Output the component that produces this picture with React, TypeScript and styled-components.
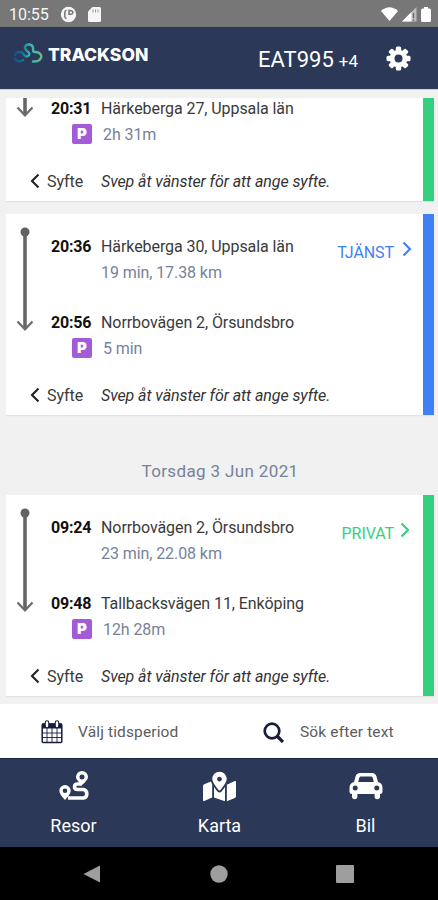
import React from "react";
import styled, { createGlobalStyle } from "styled-components";
import { FaMapMarkedAlt } from "react-icons/fa";

const GlobalStyle = createGlobalStyle`
  * { box-sizing: border-box; }
  body { margin: 0; font-family: Roboto, "Liberation Sans", sans-serif; }
`;

const Screen = styled.div`
  width: 438px;
  height: 900px;
  display: flex;
  flex-direction: column;
  overflow: hidden;
  background: #f1f1f1;
`;

const StatusBar = styled.div`
  flex: none;
  height: 27px;
  display: flex;
  align-items: center;
  justify-content: space-between;
  padding: 1px 7px 0 9px;
  background: #777;
  color: #f5f5f5;
  font-size: 16px;
`;

const StatusGroup = styled.div<{ $gap: number }>`
  display: flex;
  align-items: center;
  gap: ${(p) => p.$gap}px;
`;

const Header = styled.header`
  flex: none;
  height: 63px;
  display: flex;
  align-items: center;
  padding: 0 27px 0 13px;
  background: #2b3857;
  border-bottom: 1px solid #cdd1de;
  color: #fff;
`;

const Brand = styled.div`
  display: flex;
  align-items: center;
  gap: 5px;
  margin-top: -9px;
  font: 800 17.5px/24px Inter, sans-serif;
  letter-spacing: 0;
  flex: 1;
`;

const BrandName = styled.span`
  margin-top: 3px;
`;

const Vehicle = styled.div`
  display: flex;
  align-items: baseline;
  gap: 5px;
  margin-right: 28px;
  padding-top: 3px;
  font-size: 22px;
`;

const VehicleExtra = styled.span`
  font-size: 17px;
`;

const List = styled.main`
  flex: none;
  height: 606px;
  margin: 8px 4px 0 6px;
  overflow: hidden;
`;

const Card = styled.section<{ $stripe: string; $scrolled?: boolean }>`
  display: grid;
  grid-template-columns: 38px 1fr;
  height: 201px;
  margin-top: ${(p) => (p.$scrolled ? -98 : 0)}px;
  margin-bottom: 13px;
  background: #fff;
  border-right: 11px solid ${(p) => p.$stripe};
  box-shadow: 0 1px 1px #e2e2e2;
`;

const TrackColumn = styled.div`
  padding: 13px 0 0 10px;
`;

const Details = styled.div`
  display: grid;
  grid-template-rows: 26px 26px 24px 26px 26px 21px 26px;
  grid-template-columns: 57px 1fr auto;
  align-items: center;
  padding: 19px 11px 0 0;
  align-content: start;
  white-space: nowrap;
  font-size: 16px;
  letter-spacing: -0.08px;
`;

const Time = styled.span`
  grid-column: 1;
  padding-left: 7px;
  font-weight: 700;
  letter-spacing: -0.2px;
  color: #111;
`;

const Place = styled.span`
  grid-column: 2;
  color: #3a3a3a;
`;

const Meta = styled.span<{ $indent?: number }>`
  grid-column: 2;
  padding-left: ${(p) => p.$indent || 0}px;
  color: #76829a;
`;

const Spacer = styled.span<{ $rows?: number }>`
  grid-column: 1 / -1;
  grid-row: span ${(p) => p.$rows || 1};
  height: 100%;
`;

const Category = styled.span<{ $color: string; $inset: number }>`
  grid-column: 3;
  display: flex;
  align-items: center;
  gap: ${(p) => 8 - p.$inset}px;
  height: 26px;
  padding-right: ${(p) => p.$inset}px;
  color: ${(p) => p.$color};
`;

const CategoryLabel = styled.span`
  margin-top: 12px;
`;

const ChevronSlot = styled.span`
  display: flex;
  margin-top: 6px;
`;

const ParkingBadge = styled.span`
  grid-column: 1;
  display: flex;
  justify-content: center;
  align-items: center;
  width: 20px;
  height: 20px;
  margin-left: 28px;
  border-radius: 2px;
  background: #a45bd8;
  color: #fff;
  font: 900 15px/20px Inter, sans-serif;
`;

const Purpose = styled.span`
  display: flex;
  align-items: center;
  gap: 7px;
  margin-left: -14px;
  color: #3a3a3a;
`;

const Hint = styled.em`
  grid-column: 2;
  color: #333;
`;

const DayHeading = styled.h2`
  height: 67px;
  margin: 0;
  padding-top: 31px;
  font-size: 17px;
  font-weight: 400;
  letter-spacing: 0.36px;
  line-height: 24px;
  text-align: center;
  color: #76829a;
`;

const Filters = styled.div`
  flex: none;
  display: grid;
  grid-template-columns: 222px 1fr;
  height: 54px;
  background: #fff;
`;

const Filter = styled.div<{ $gap: number }>`
  display: flex;
  align-items: center;
  gap: ${(p) => p.$gap}px;
  padding: 2px 0 0 41px;
  font-size: 15.5px;
  letter-spacing: 0.14px;
  color: #5c5c5c;

  svg { color: #171e3c; }
`;

const Tabs = styled.nav`
  flex: none;
  display: grid;
  grid-template-columns: repeat(3, 146px);
  height: 89px;
  border-top: 1px solid #1c2748;
  background: #2b3857;
`;

const Tab = styled.div`
  display: flex;
  flex-direction: column;
  align-items: center;
  padding-top: 10px;
  padding-left: 1px;
  font-size: 18px;
  line-height: 24px;
  color: #fff;
`;

const TabIcon = styled.span`
  display: flex;
  align-items: center;
  height: 34px;
  margin-bottom: 11px;
`;

const SystemBar = styled.div`
  flex: none;
  height: 53px;
  display: flex;
  align-items: center;
  justify-content: space-between;
  padding: 0 84px 0 83px;
  background: #000;
`;

const BrandMark = () => (
  <svg width="30" height="22" viewBox="0 0 30 22" fill="none" strokeWidth="2.4" strokeLinecap="round">
    <defs>
      <linearGradient id="mark" gradientUnits="userSpaceOnUse" x1="1" y1="14" x2="29" y2="14">
        <stop offset="0" stopColor="#174d85" />
        <stop offset="0.3" stopColor="#13719a" />
        <stop offset="0.55" stopColor="#31b7b0" />
        <stop offset="1" stopColor="#67b98b" />
      </linearGradient>
    </defs>
    <path
      d="M2 12C4 8 9 8 11 12C13 15 17 13 16 10C15 8 11 7 12 4C13 .500 19 .500 20 4.500C20.500 7 19 9 22 9C27 8.500 30 13 27 16.500C25 19 22 18.500 20 18.500M2 16C4 19 8 19 10 17"
      stroke="url(#mark)"
    />
  </svg>
);

const AppGlyph = () => (
  <svg width="17" height="17" viewBox="0 0 17 17">
    <circle cx="8.500" cy="8.500" r="7.700" fill="#f5f5f5" />
    <path d="M6.500 4.300Q4.800 4.500 4.800 6.500V10.500Q5 12 6.500 12.500M9 3.500V9M9 4.700H11A1.800 1.800 0 0 1 11 8.300H9" fill="none" stroke="#777" strokeWidth="1.500" />
  </svg>
);

const SdCard = () => (
  <svg width="13" height="15" viewBox="0 0 13 15">
    <path d="M4.500 0H11.500Q13 0 13 1.500V13.500Q13 15 11.500 15H1.500Q0 15 0 13.500V4.500Z" fill="#f5f5f5" />
    <path d="M5 2.500v3M7.500 2.500v3M10 2.500v3" stroke="#999" />
  </svg>
);

const Wifi = () => (
  <svg width="17" height="14" viewBox="0 0 17 14">
    <path d="M0 4Q8.500-3.500 17 4L8.500 14Z" fill="#fff" />
  </svg>
);

const Signal = () => (
  <svg width="15" height="15" viewBox="0 0 15 15">
    <path d="M0 14.500L14.500 0V14.500Z" fill="#bdbdbd" />
    <path d="M0 14.500L9.500 5V14.500Z" fill="#fff" />
    <path d="M11.500 6v5M11.500 12.500v1.500" stroke="#666" strokeWidth="1.300" />
  </svg>
);

const Battery = () => (
  <svg width="10" height="15" viewBox="0 0 10 15">
    <path d="M3 0H7V1.500H8.500Q10 1.500 10 3V13.500Q10 15 8.500 15H1.500Q0 15 0 13.500V3Q0 1.500 1.500 1.500H3Z" fill="#fff" />
  </svg>
);

const GearIcon = () => (
  <svg width="25" height="25" viewBox="-12.5 -12.5 25 25">
    {[0, 45, 90, 135].map((angle) => (
      <rect key={angle} x="-2.7" y="-12" width="5.4" height="24" rx="1.5" fill="#fff" transform={`rotate(${angle})`} />
    ))}
    <circle r="8.800" fill="#fff" />
    <circle r="4" fill="#2b3857" />
  </svg>
);

const TrackLine = () => (
  <svg width="18" height="106" viewBox="0 0 18 106" fill="none" stroke="#6c6c6c">
    <path d="M9 5V102" stroke="#858585" strokeWidth="4" />
    <path d="M9 5V102" stroke="#666" strokeWidth="2" />
    <path d="M1.500 94.500L9 102.300L16.500 94.500" strokeWidth="2.200" />
    <circle cx="9" cy="5" r="4.500" fill="#626262" stroke="none" />
  </svg>
);

const Chevron = ({ left }: { left?: boolean }) => (
  <svg width="10" height="16" viewBox="0 0 10 16" fill="none" stroke={left ? "#222" : "currentColor"} strokeWidth="2.100">
    <path d={left ? "M8.500 1.500L2 8L8.500 14.500" : "M1.500 1.500L8 8L1.500 14.500"} />
  </svg>
);

const CalendarIcon = () => (
  <svg width="22" height="24" viewBox="0 0 22 24" fill="none" stroke="currentColor">
    <rect x="1.200" y="4" width="19.600" height="18.500" rx="1" strokeWidth="1.500" />
    <path d="M1 3.500H21V8.500H1Z" fill="currentColor" stroke="none" />
    <path d="M1 13H21M1 17.500H21M6 8V22M11 8V22M16 8V22" strokeWidth="0.900" />
    <path d="M6 2.500V6M16 2.500V6" strokeWidth="4.600" strokeLinecap="round" />
    <path d="M6 2.500V6M16 2.500V6" stroke="#fff" strokeWidth="2.400" strokeLinecap="round" />
  </svg>
);

const SearchIcon = () => (
  <svg width="21" height="21" viewBox="0 0 21 21" fill="none" stroke="currentColor">
    <circle cx="9" cy="9" r="7.300" strokeWidth="2.700" />
    <path d="M14 14L20 20" strokeWidth="3.200" />
  </svg>
);

const RouteIcon = () => (
  <svg width="30" height="30" viewBox="0 0 30 30">
    <path
      d="M23 13H18.500Q15.500 13 15.500 15.700T18.500 18.500H24.500Q27.800 19 27.800 22.800T24.500 27H9"
      fill="none"
      stroke="#fff"
      strokeWidth="3.600"
    />
    <path
      fill="#fff"
      fillRule="evenodd"
      d="M23 0A6 6 0 0 1 29 6Q29 9 23 14Q17 9 17 6A6 6 0 0 1 23 0ZM23 3.500A2.500 2.500 0 1 0 23 8.500A2.500 2.500 0 1 0 23 3.500ZM6 14A5.700 5.700 0 0 1 11.700 19.700Q11.700 23 6 29Q.300 23 .300 19.700A5.700 5.700 0 0 1 6 14ZM6 17.500A2.300 2.300 0 1 0 6 22.100A2.300 2.300 0 1 0 6 17.500Z"
    />
  </svg>
);

const CarIcon = () => (
  <svg width="34" height="28" viewBox="0 0 34 28">
    <path
      fill="#fff"
      fillRule="evenodd"
      d="M11 1H23Q26.500 1 27.500 4.500L29 10Q33.500 11 33.500 16V20Q33.500 22 31 22V24.500A2.700 2.700 0 0 1 25.600 24.500V22H8.400V24.500A2.700 2.700 0 0 1 3 24.500V22Q.500 22 .500 20V16Q.500 11 5 10L6.500 4.500Q7.500 1 11 1ZM11.500 4.500Q10.500 4.500 10.200 6L9.200 10H24.800L23.800 6Q23.500 4.500 22.500 4.500ZM6.200 13.500A2.500 2.500 0 1 0 6.200 18.500A2.500 2.500 0 1 0 6.200 13.500ZM27.800 13.500A2.500 2.500 0 1 0 27.800 18.500A2.500 2.500 0 1 0 27.800 13.500Z"
    />
  </svg>
);

interface Stop {
  time: string;
  place: string;
}

interface Departure extends Stop {
  summary: string;
  category: string;
  chevronInset: number;
}

interface TripProps {
  from?: Departure;
  to: Stop;
  parked: string;
  color: string;
}

const Trip = ({ from, to, parked, color }: TripProps) => (
  <Card $stripe={color} $scrolled={!from}>
    <TrackColumn>
      <TrackLine />
    </TrackColumn>
    <Details>
      {from ? (
        <>
          <Time>{from.time}</Time>
          <Place>{from.place}</Place>
          <Category $color={color} $inset={from.chevronInset}>
            <CategoryLabel>{from.category}</CategoryLabel>
            <ChevronSlot>
              <Chevron />
            </ChevronSlot>
          </Category>
          <Meta>{from.summary}</Meta>
          <Spacer />
        </>
      ) : (
        <Spacer $rows={3} />
      )}
      <Time>{to.time}</Time>
      <Place>{to.place}</Place>
      <ParkingBadge>P</ParkingBadge>
      <Meta $indent={2}>{parked}</Meta>
      <Spacer />
      <Purpose>
        <Chevron left />
        Syfte
      </Purpose>
      <Hint>Svep åt vänster för att ange syfte.</Hint>
    </Details>
  </Card>
);

const GREEN = "#35d07f";
const BLUE = "#3f80f7";

export default function App() {
  return (
    <>
      <GlobalStyle />
      <Screen>
        <StatusBar>
          <StatusGroup $gap={11}>
            <span>10:55</span>
            <AppGlyph />
            <SdCard />
          </StatusGroup>
          <StatusGroup $gap={4}>
            <Wifi />
            <Signal />
            <Battery />
          </StatusGroup>
        </StatusBar>
        <Header>
          <Brand>
            <BrandMark />
            <BrandName>TRACKSON</BrandName>
          </Brand>
          <Vehicle>
            EAT995 <VehicleExtra>+4</VehicleExtra>
          </Vehicle>
          <GearIcon />
        </Header>
        <List>
          <Trip to={{ time: "20:31", place: "Härkeberga 27, Uppsala län" }} parked="2h 31m" color={GREEN} />
          <Trip
            from={{
              time: "20:36",
              place: "Härkeberga 30, Uppsala län",
              summary: "19 min, 17.38 km",
              category: "TJÄNST",
              chevronInset: 0,
            }}
            to={{ time: "20:56", place: "Norrbovägen 2, Örsundsbro" }}
            parked="5 min"
            color={BLUE}
          />
          <DayHeading>Torsdag 3 Jun 2021</DayHeading>
          <Trip
            from={{
              time: "09:24",
              place: "Norrbovägen 2, Örsundsbro",
              summary: "23 min, 22.08 km",
              category: "PRIVAT",
              chevronInset: 2,
            }}
            to={{ time: "09:48", place: "Tallbacksvägen 11, Enköping" }}
            parked="12h 28m"
            color={GREEN}
          />
        </List>
        <Filters>
          <Filter $gap={15}>
            <CalendarIcon />
            Välj tidsperiod
          </Filter>
          <Filter $gap={16}>
            <SearchIcon />
            Sök efter text
          </Filter>
        </Filters>
        <Tabs>
          <Tab>
            <TabIcon><RouteIcon /></TabIcon>
            Resor
          </Tab>
          <Tab>
            <TabIcon><FaMapMarkedAlt size={33} /></TabIcon>
            Karta
          </Tab>
          <Tab>
            <TabIcon><CarIcon /></TabIcon>
            Bil
          </Tab>
        </Tabs>
        <SystemBar>
          <svg width="18" height="18" viewBox="0 0 18 18"><path d="M0.500 9L17 0.500V17.500Z" fill="#9e9e9e" /></svg>
          <svg width="18" height="18" viewBox="0 0 18 18"><circle cx="9" cy="9" r="8.700" fill="#9e9e9e" /></svg>
          <svg width="18" height="18" viewBox="0 0 18 18"><rect width="18" height="18" rx="1" fill="#9e9e9e" /></svg>
        </SystemBar>
      </Screen>
    </>
  );
}
